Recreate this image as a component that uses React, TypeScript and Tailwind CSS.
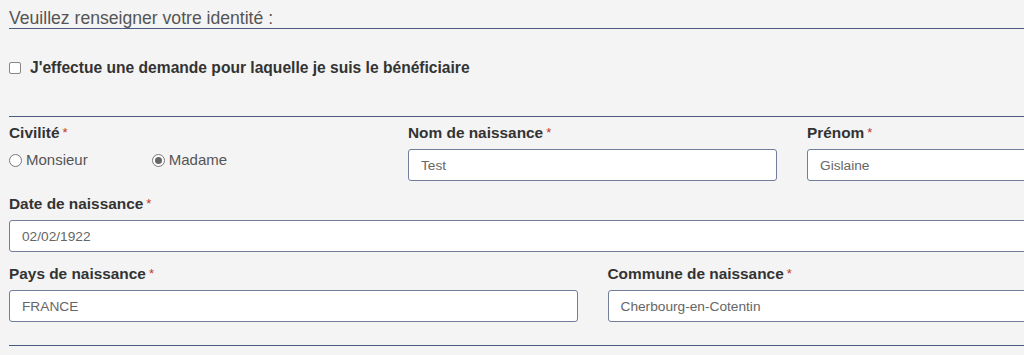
import React from 'react';

function Label({ children }: { children: React.ReactNode }) {
  return (
    <div className="text-[15.4px] font-bold text-[#333] leading-[18px]">
      {children}
      <span className="text-[#c0392b] font-normal text-[13px] align-top ml-[3px]">*</span>
    </div>
  );
}

function Field({ label, value }: { label: string; value: string }) {
  return (
    <div>
      <Label>{label}</Label>
      <input
        readOnly
        value={value}
        className="mt-[7px] block w-full h-[32px] bg-white border border-[#717d9b] rounded-[3px] px-[12px] text-[13.7px] text-[#666] outline-none"
      />
    </div>
  );
}

function Radio({ label, checked }: { label: string; checked?: boolean }) {
  return (
    <label className="flex items-center gap-[4px] text-[15px] text-[#555]">
      <span className="w-[13px] h-[13px] rounded-full border border-[#777] bg-white flex items-center justify-center">
        {checked && <span className="w-[7px] h-[7px] rounded-full bg-[#666]" />}
      </span>
      {label}
    </label>
  );
}

export default function App() {
  return (
    <div className="w-[1024px] h-[355px] overflow-hidden bg-[#f4f4f4] font-['Liberation_Sans',Arial,sans-serif]">
      <div className="w-[1167px] ml-[9px]">
        {/* Header */}
        <div className="border-b border-[#4a5a85] pt-[9px] pb-[1px] text-[17.6px] leading-[18px] text-[#555]">
          Veuillez renseigner votre identité :
        </div>

        <label className="mt-[30px] flex items-center gap-[9px]">
          <span className="w-[12px] h-[12px] rounded-[2px] border border-[#888] bg-white" />
          <span className="text-[15.6px] font-bold text-[#333] leading-[18px]">
            J'effectue une demande pour laquelle je suis le bénéficiaire
          </span>
        </label>

        <div className="mt-[39px] border-b border-[#4a5a85]" />

        <div className="mt-[7px] grid grid-cols-3 gap-x-[30px]">
          <div>
            <Label>Civilité</Label>
            <div className="mt-[7px] flex gap-[64px]">
              <Radio label="Monsieur" />
              <Radio label="Madame" checked />
            </div>
          </div>
          <Field label="Nom de naissance" value="Test" />
          <Field label="Prénom" value="Gislaine" />
        </div>

        <div className="mt-[14px]">
          <Field label="Date de naissance" value="02/02/1922" />
        </div>

        <div className="mt-[13px] grid grid-cols-2 gap-x-[30px]">
          <Field label="Pays de naissance" value="FRANCE" />
          <Field label="Commune de naissance" value="Cherbourg-en-Cotentin" />
        </div>

        <div className="mt-[23px] border-b border-[#4a5a85]" />
      </div>
    </div>
  );
}
